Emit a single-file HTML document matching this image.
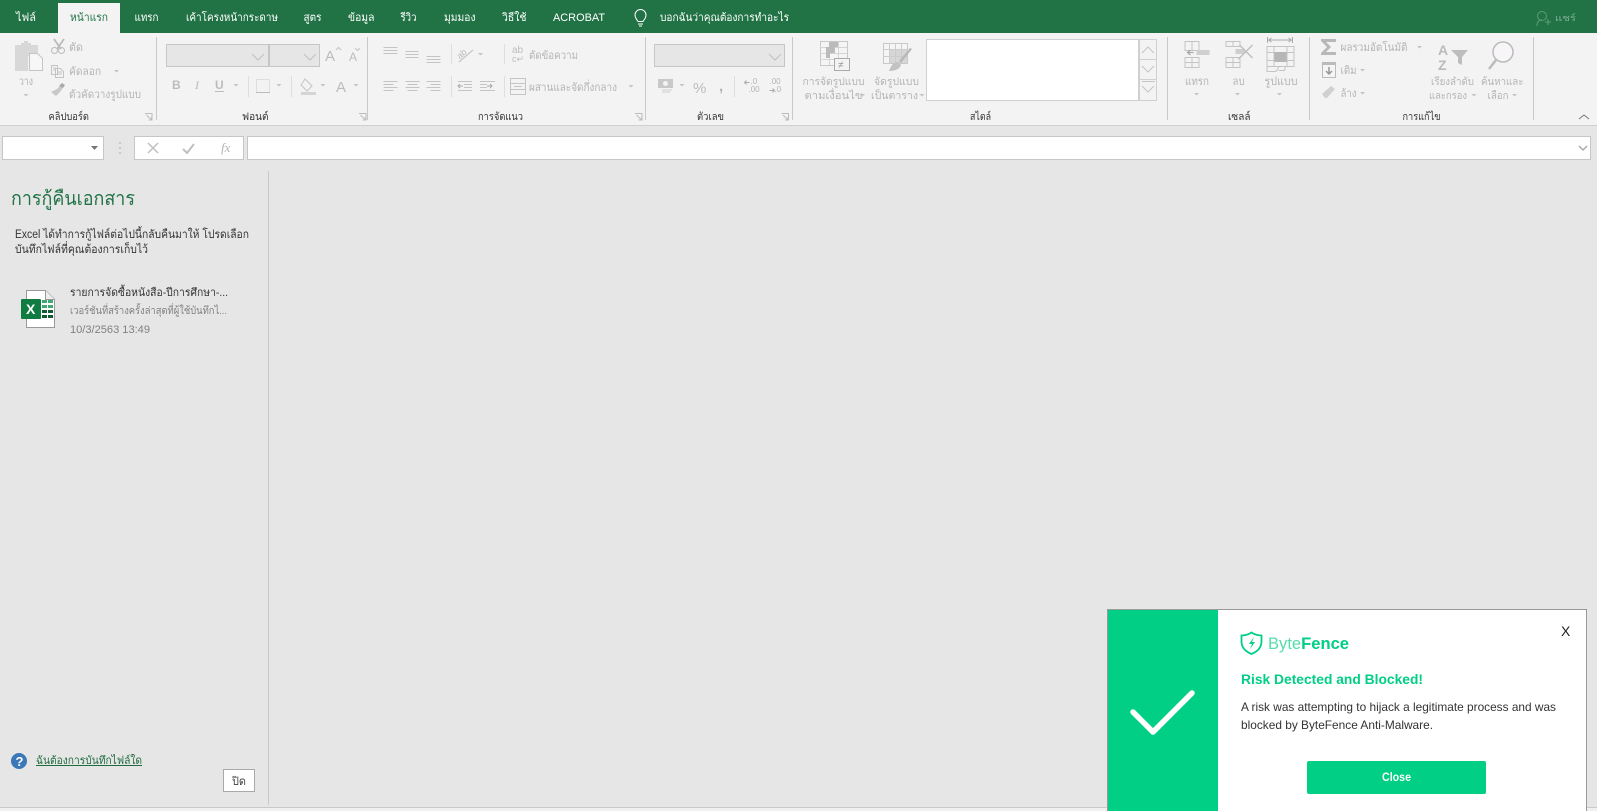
<!DOCTYPE html>
<html lang="th"><head><meta charset="utf-8"><title>Excel</title>
<style>
html,body{margin:0;padding:0;background:#e6e6e6;overflow:hidden}
svg{display:block;font-family:"Liberation Sans","DejaVu Sans","Noto Sans CJK SC",sans-serif}
.tab{fill:#fff;font-size:11px}
.d{fill:#b4b4b4;font-size:11px}
.g{fill:#333;font-size:10.5px}
.ic{fill:none;stroke:#c4c4c4;stroke-width:1}
.f{fill:#c8c8c8}
.sep{stroke:#c9c9c9;stroke-width:1}
.sep2{stroke:#dedede;stroke-width:1}
</style></head><body>
<svg width="1597" height="811" viewBox="0 0 1597 811" xmlns="http://www.w3.org/2000/svg">
<defs>
<path id="ar" d="M0 0h5l-2.500 2.500z" fill="#c4c4c4"/>
<path id="la" d="M.5.5h7v7M2 2l5 5M7 4v3H4" fill="none" stroke="#bdbdbd"/>
</defs>
<rect width="1597" height="811" fill="#e6e6e6"/>
<!-- title tabs -->
<rect width="1597" height="33" fill="#217346"/>
<rect x="58" y="3" width="62" height="30" fill="#f3f3f3"/>
<g class="tab">
<text x="16" y="21" textLength="20" lengthAdjust="spacingAndGlyphs">ไฟล์</text>
<text x="70" y="21" textLength="38" lengthAdjust="spacingAndGlyphs" style="fill:#217346">หน้าแรก</text>
<text x="134.500" y="21" textLength="24" lengthAdjust="spacingAndGlyphs">แทรก</text>
<text x="186" y="21" textLength="92" lengthAdjust="spacingAndGlyphs">เค้าโครงหน้ากระดาษ</text>
<text x="303.500" y="21" textLength="18" lengthAdjust="spacingAndGlyphs">สูตร</text>
<text x="348" y="21" textLength="26.500" lengthAdjust="spacingAndGlyphs">ข้อมูล</text>
<text x="400.500" y="21" textLength="16" lengthAdjust="spacingAndGlyphs">รีวิว</text>
<text x="444" y="21" textLength="31.500" lengthAdjust="spacingAndGlyphs">มุมมอง</text>
<text x="502" y="21" textLength="24.500" lengthAdjust="spacingAndGlyphs">วิธีใช้</text>
<text x="553" y="21" textLength="52" lengthAdjust="spacingAndGlyphs">ACROBAT</text>
<text x="660" y="21" textLength="129" lengthAdjust="spacingAndGlyphs">บอกฉันว่าคุณต้องการทำอะไร</text>
</g>
<path d="M638 21.500c-1-2-3-3-3-6.500a5.500 5.500 0 0 1 11 0c0 3.500-2 4.500-3 6.500zM638 24h5M639 26h3" fill="none" stroke="#fff"/>
<g transform="translate(13 0)">
<circle cx="1529" cy="16" r="4.500" fill="none" stroke="#5f9c7b"/>
<path d="M1524 26c0-4 2-6 5-6M1532 22h6M1535 19v6" fill="none" stroke="#5f9c7b"/>
<text x="1542" y="21" class="tab" style="font-size:9px;fill:#7fae95" textLength="21" lengthAdjust="spacingAndGlyphs">แชร์</text>
</g>
<!-- ribbon -->
<rect y="33" width="1597" height="92" fill="#f3f3f3"/>
<path d="M0 125.500h1597" stroke="#cfcfcf"/>
<g class="sep">
<path d="M156.500 37v83M367.500 37v83M645.500 37v83M792.500 37v83M1167.500 37v83M1309.500 37v83M1533.500 37v83"/>
</g>
<g class="sep2">
<path d="M248.500 76v21M291.500 76v21M451.500 44v20M451.500 76v21M504.500 44v20M504.500 76v21M734.500 76v21"/>
</g>
<!-- group labels -->
<g class="g">
<text x="48.500" y="120" textLength="40.500" lengthAdjust="spacingAndGlyphs">คลิปบอร์ด</text>
<text x="242" y="120" textLength="26.500" lengthAdjust="spacingAndGlyphs">ฟอนต์</text>
<text x="478" y="120" textLength="45" lengthAdjust="spacingAndGlyphs">การจัดแนว</text>
<text x="697" y="120" textLength="27" lengthAdjust="spacingAndGlyphs">ตัวเลข</text>
<text x="970" y="120" textLength="21" lengthAdjust="spacingAndGlyphs">สไตล์</text>
<text x="1228" y="120" textLength="22.500" lengthAdjust="spacingAndGlyphs">เซลล์</text>
<text x="1402.500" y="120" textLength="38" lengthAdjust="spacingAndGlyphs">การแก้ไข</text>
</g>
<use href="#la" x="144.500" y="113"/><use href="#la" x="358.500" y="113"/><use href="#la" x="634.500" y="113"/><use href="#la" x="781" y="113"/>
<path d="M1579 119l5-4 5 4" fill="none" stroke="#777"/>
<!-- clipboard -->
<g transform="translate(1 0)">
<path d="M14 45h6v-2h3v-2h4v2h3v2h7v11h-10v15h-13z" fill="#d8d8d8"/>
<path d="M28.500 53.500h8l5 5v12h-13z" fill="#f7f7f7" stroke="#c4c4c4"/>
<text x="18" y="85" class="d" textLength="14" lengthAdjust="spacingAndGlyphs">วาง</text>
<use href="#ar" x="22.500" y="94"/>
<path d="M53 39l7 10M63 39l-7 10" stroke="#bbb" stroke-width="1.800" fill="none"/>
<circle cx="53.500" cy="50.500" r="3" fill="none" stroke="#bbb"/><circle cx="60.500" cy="50.500" r="3" fill="none" stroke="#bbb"/>
<text x="68" y="51" class="d" textLength="14" lengthAdjust="spacingAndGlyphs">ตัด</text>
<path d="M50.500 65.500h6v9h-6zM54.500 68.500h5l3 3v6h-8zM52 68h3M52 70h2M56 72h5M56 74h5" class="ic"/>
<text x="68" y="75" class="d" textLength="32" lengthAdjust="spacingAndGlyphs">คัดลอก</text>
<use href="#ar" x="113" y="70"/>
<path d="M50 92l6-3 4-4 2 3-4 5-3 3z" class="f"/><path d="M58 86l3-3 3 2-2 3z" fill="#aaa"/>
<text x="68" y="98" class="d" textLength="72" lengthAdjust="spacingAndGlyphs">ตัวคัดวางรูปแบบ</text>
</g>
<!-- font -->
<rect x="166.500" y="44.500" width="102" height="22" fill="#e6e6e6" stroke="#c6c6c6"/>
<rect x="269.500" y="44.500" width="50" height="22" fill="#e6e6e6" stroke="#c6c6c6"/>
<path d="M252 54l6 6 6-6M304 54l6 6 6-6" fill="none" stroke="#c0c0c0"/>
<g transform="translate(5 0)">
<text x="320" y="61" style="font-size:15px;fill:#bcbcbc">A</text><path d="M331 50l2.500-2.500L336 50" class="ic"/>
<text x="344" y="61" style="font-size:12px;fill:#bcbcbc">A</text><path d="M350 48l2.500 2.500L355 48" class="ic"/>
</g>
<g transform="translate(3 0)">
<g style="fill:#bcbcbc;font-size:12px">
<text x="169" y="89" font-weight="700">B</text>
<text x="192" y="89" font-style="italic" font-family="Liberation Serif">I</text>
<text x="212" y="89" font-weight="700">U</text>
</g>
<path d="M212 91.500h9" stroke="#bcbcbc"/>
<use href="#ar" x="230.500" y="84"/>
</g>
<g transform="translate(4 0)">
<rect x="252.500" y="79.500" width="13" height="13" fill="none" stroke="#c8c8c8" stroke-dasharray="1 1"/>
<path d="M252 92.500h14" stroke="#bbb"/>
<use href="#ar" x="272.500" y="84"/>
</g>
<g transform="translate(5 0)">
<path d="M300 79l7 7-5 5-6-6z" class="ic"/><path d="M296 92h15v3h-15z" fill="#d4d4d4"/>
<use href="#ar" x="315.500" y="84"/>
<text x="331" y="92" style="font-size:15px;fill:#bcbcbc">A</text>
<use href="#ar" x="348.500" y="84"/>
</g>
<!-- alignment -->
<g transform="translate(5.500 0)">
<g class="ic">
<path d="M378 47.500h14M378 50.500h14M378 53.500h14M400 51.500h13M400 54.500h13M400 57.500h13M421 56.500h14M421 59.500h14M421 62.500h14"/>
<path d="M378 81.500h14M378 84.500h10M378 87.500h14M378 90.500h10M400 81.500h14M402 84.500h10M400 87.500h14M402 90.500h10M421 81.500h14M425 84.500h10M421 87.500h14M425 90.500h10"/>
</g>
</g>
<g transform="translate(7 0)">
<g class="ic">
<path d="M451 81.500h14M457 84.500h8M457 87.500h8M451 90.500h14M473 81.500h15M473 84.500h7M473 87.500h7M473 90.500h15"/>
<path d="M503.500 78.500h15v16h-15zM503.500 83.500h15M503.500 89.500h15M507 86.500h8"/>
</g>
<path d="M456 86l-4-0M453 84l-2 2 2 2M480 86h5M483 84l2 2-2 2" fill="none" stroke="#aaa"/>
<text x="450" y="56" style="font-size:9px;fill:#bcbcbc" transform="rotate(-40 456 54)">ab</text>
<path d="M452 62l14-12" stroke="#bbb"/>
<use href="#ar" x="471" y="53"/>
<text x="505" y="53" style="font-size:10px;fill:#bcbcbc">ab</text><text x="505" y="62" style="font-size:9px;fill:#bcbcbc">c↵</text>
</g>
<text x="529" y="59" class="d" textLength="49" lengthAdjust="spacingAndGlyphs">ตัดข้อความ</text>
<text x="529" y="91" class="d" textLength="88" lengthAdjust="spacingAndGlyphs">ผสานและจัดกึ่งกลาง</text>
<use href="#ar" x="628.500" y="85"/>
<!-- number -->
<rect x="654.500" y="44.500" width="130" height="22" fill="#e6e6e6" stroke="#c6c6c6"/>
<path d="M769 54l6 6 6-6" fill="none" stroke="#c0c0c0" stroke-width="1"/>
<g transform="translate(2 0)">
<rect x="656" y="79" width="15" height="9" fill="#c8c8c8"/><circle cx="663.500" cy="83.500" r="2.500" fill="#f3f3f3"/>
<path d="M660 90h10M660 92h8" stroke="#ccc"/>
<use href="#ar" x="677.500" y="84"/>
<text x="691" y="93" style="font-size:15px;fill:#bcbcbc">%</text>
</g>
<text x="719" y="91" style="font-size:15px;font-weight:700;fill:#b4b4b4">,</text>
<g transform="translate(3.500 0)">
<g style="font-size:8px;fill:#b4b4b4">
<text x="747" y="84">.0</text><text x="745" y="92">.00</text><text x="766" y="84">.00</text><text x="771" y="92">.0</text>
</g>
<path d="M741 82.500h5M743 80.500l-2 2 2 2M766 90.500h5M769 88.500l2 2-2 2" fill="none" stroke="#aaa"/>
</g>
<!-- styles -->
<g transform="translate(4 0)">
<rect x="816.500" y="41.500" width="27" height="24" fill="#f5f5f5" stroke="#c8c8c8"/>
<path d="M816 47.500h27M816 53.500h27M816 59.500h27M825.500 41v24M834.500 41v24" stroke="#d5d5d5" fill="none"/>
<path d="M825 42h9v5h-3v6h-5v5h-4v-11h3z" fill="#bbb"/>
<rect x="830.500" y="58.500" width="15" height="12" fill="#f3f3f3" stroke="#aaa"/>
<text x="834" y="68" style="font-size:10px;fill:#999">≠</text>
</g>
<g transform="translate(5 0)">
<rect x="878.500" y="43.500" width="24" height="20" fill="#f5f5f5" stroke="#c8c8c8"/>
<rect x="884" y="50" width="18" height="13" fill="#d6d6d6"/>
<path d="M878 49.500h24M878 56.500h24M884.500 43v20M890.500 43v20M896.500 43v20" stroke="#ccc" fill="none"/>
<path d="M907 49l-11 14-2-2 11-13z" fill="#b8b8b8"/>
<path d="M884 71c2-6 5-9 9-9l3 3c-1 4-6 6-12 6z" fill="#c2c2c2"/>
</g>
<g class="d" style="font-size:10.500px">
<text x="802.500" y="85" textLength="62" lengthAdjust="spacingAndGlyphs">การจัดรูปแบบ</text>
<text x="804.500" y="99" textLength="58" lengthAdjust="spacingAndGlyphs">ตามเงื่อนไข</text>
<text x="874" y="85" textLength="45" lengthAdjust="spacingAndGlyphs">จัดรูปแบบ</text>
<text x="871" y="99" textLength="47" lengthAdjust="spacingAndGlyphs">เป็นตาราง</text>
</g>
<use href="#ar" x="860" y="94"/><use href="#ar" x="919.500" y="94"/>
<rect x="926.500" y="39.500" width="212" height="61" fill="#fff" stroke="#d0d0d0"/>
<rect x="1139.500" y="39.500" width="17" height="61" fill="#f3f3f3" stroke="#d0d0d0"/>
<path d="M1139 59.500h18M1139 79.500h18" stroke="#d0d0d0"/>
<path d="M1142 53l6-6 6 6M1142 66l6 6 6-6M1142 86l6 6 6-6M1142 81.500h13" fill="none" stroke="#c4c4c4"/>
<!-- cells -->
<g transform="translate(3.500 0)">
<path class="ic" d="M1181.500 41.500h14v9h-14zM1188.500 41.500v9M1181.500 57.500h14v10h-14zM1181.500 62.500h14M1188.500 57.500v10"/>
<rect x="1193" y="50" width="13" height="5" fill="#cfcfcf"/><path d="M1184 52.500h6M1187 50l-3 2.500 3 2.500" fill="none" stroke="#aaa" stroke-width="1.300"/>
<use href="#ar" x="1190.500" y="93"/>
</g>
<g transform="translate(4.500 0)">
<path class="ic" d="M1221.500 41.500h14v5h-14zM1228.500 41.500v5M1221.500 57.500h14v10h-14zM1221.500 62.500h14M1228.500 57.500v10"/>
<rect x="1231" y="49" width="9" height="5" fill="#cfcfcf"/>
<path d="M1235 45l13 13M1248 45l-14 14" stroke="#bfbfbf" stroke-width="1.500"/>
<use href="#ar" x="1230.500" y="93"/>
</g>
<g transform="translate(5.500 0)">
<path class="ic" d="M1261.500 46.500h27v20h-27zM1268.500 46.500v20M1281.500 46.500v20M1261.500 52.500h27M1261.500 60.500h27M1261.500 66.500v5h9l3-5M1280 66.500l-1 4h-6"/>
<rect x="1269" y="52" width="12" height="10" fill="#b6b6b6"/>
<path d="M1262 37v6M1287 37v6M1263 40h23M1266 38l-3 2 3 2M1283 38l3 2-3 2" fill="none" stroke="#aaa"/>
<use href="#ar" x="1271.500" y="93"/>
</g>
<g class="d">
<text x="1185" y="85" textLength="24" lengthAdjust="spacingAndGlyphs">แทรก</text>
<text x="1232.500" y="85" textLength="12" lengthAdjust="spacingAndGlyphs">ลบ</text>
<text x="1264.500" y="85" textLength="33" lengthAdjust="spacingAndGlyphs">รูปแบบ</text>
</g>
<!-- editing -->
<g transform="translate(7 0)">
<path d="M1314 39h15v3h-10l5 5-5 5h10v3h-15v-2l6-6-6-6z" fill="#b8b8b8"/>
<rect x="1315.500" y="62.500" width="13" height="15" fill="#f5f5f5" stroke="#bbb"/><rect x="1315" y="62" width="14" height="3" fill="#bbb"/>
<path d="M1322 67v7M1319 71l3 3 3-3" fill="none" stroke="#999" stroke-width="1.500"/>
<path d="M1315 94l9-8 4 3-8 9h-2z" fill="#d0d0d0"/>
</g>
<text x="1340.500" y="51" class="d" textLength="67" lengthAdjust="spacingAndGlyphs">ผลรวมอัตโนมัติ</text>
<use href="#ar" x="1417" y="46"/>
<text x="1340.500" y="74" class="d" textLength="16" lengthAdjust="spacingAndGlyphs">เติม</text>
<use href="#ar" x="1360" y="69"/>
<text x="1340.500" y="97" class="d" textLength="16" lengthAdjust="spacingAndGlyphs">ล้าง</text>
<use href="#ar" x="1360" y="92"/>
<g transform="translate(10 0)">
<text x="1428" y="55" style="font-size:14px;fill:#bbb;font-weight:700">A</text>
<text x="1428" y="70" style="font-size:14px;fill:#bbb;font-weight:700">Z</text>
<path d="M1441 50h17l-6 7v8l-4-2v-6z" fill="#bdbdbd"/>
</g>
<circle cx="1503" cy="52" r="10" fill="#f8f5f8" stroke="#bbb" stroke-width="1.500"/>
<path d="M1496 60l-7 9" stroke="#bbb" stroke-width="2.500"/>
<g class="d" style="font-size:10.500px">
<text x="1431" y="85" textLength="43" lengthAdjust="spacingAndGlyphs">เรียงลำดับ</text>
<text x="1429" y="99" textLength="38" lengthAdjust="spacingAndGlyphs">และกรอง</text>
<text x="1481" y="85" textLength="42.500" lengthAdjust="spacingAndGlyphs">ค้นหาและ</text>
<text x="1487.500" y="99" textLength="21" lengthAdjust="spacingAndGlyphs">เลือก</text>
</g>
<use href="#ar" x="1471.500" y="94"/><use href="#ar" x="1512" y="94"/>
<!-- formula bar -->
<rect x="2.500" y="136.500" width="101" height="23" fill="#fff" stroke="#c6c6c6"/>
<path d="M91 146h7l-3.500 4z" fill="#777"/>
<path d="M120 142v2M120 147v2M120 152v2" stroke="#aaa"/>
<rect x="134.500" y="136.500" width="109" height="23" fill="#fff" stroke="#c6c6c6"/>
<path d="M148 143l10 10M158 143l-10 10" stroke="#c0c0c0" stroke-width="1.500"/>
<path d="M183 149l4 4 7-9" fill="none" stroke="#c0c0c0" stroke-width="2"/>
<text x="221" y="152" style="font-family:'Liberation Serif';font-style:italic;font-size:13px;fill:#b5b5b5">fx</text>
<rect x="247.500" y="136.500" width="1343" height="23" fill="#fff" stroke="#c6c6c6"/>
<path d="M1579 146l4 4 4-4" fill="none" stroke="#aaa" stroke-width="1.500"/>
<!-- recovery panel -->
<path d="M268.500 171v634" stroke="#c8c8c8"/>
<path d="M0 807.500h1597" stroke="#c9c9c9"/><rect y="808" width="1597" height="3" fill="#f0f0f0"/>
<text x="11" y="205" style="font-size:19.500px;fill:#217346" textLength="124" lengthAdjust="spacingAndGlyphs">การกู้คืนเอกสาร</text>
<g style="font-size:11.500px;fill:#333">
<text x="15" y="238" textLength="234" lengthAdjust="spacingAndGlyphs">Excel ได้ทำการกู้ไฟล์ต่อไปนี้กลับคืนมาให้ โปรดเลือก</text>
<text x="15" y="253" textLength="133" lengthAdjust="spacingAndGlyphs">บันทึกไฟล์ที่คุณต้องการเก็บไว้</text>
</g>
<path d="M26.500 290.500h19l9 9v28h-28z" fill="#fff" stroke="#9a9a9a"/>
<path d="M45.500 290.500v9h9" fill="#eee" stroke="#9a9a9a"/>
<rect x="21" y="299" width="20" height="20" rx="1" fill="#107c41"/>
<text x="26" y="314" style="font-size:14px;font-weight:700;fill:#fff">X</text>
<path d="M42 300h5v3h-5zM48 300h5v3h-5zM42 305h5v3h-5zM48 305h5v3h-5z" fill="#3fa873"/>
<path d="M42 310h5v3h-5zM48 310h5v3h-5zM42 315h5v3h-5zM48 315h5v3h-5z" fill="#0f5c33"/>
<text x="70" y="296" style="font-size:11px;fill:#333" textLength="158" lengthAdjust="spacingAndGlyphs">รายการจัดซื้อหนังสือ-ปีการศึกษา-...</text>
<text x="70" y="314" style="font-size:10.500px;fill:#808080" textLength="157" lengthAdjust="spacingAndGlyphs">เวอร์ชันที่สร้างครั้งล่าสุดที่ผู้ใช้บันทึกไ...</text>
<text x="70" y="333" style="font-size:11px;fill:#808080" textLength="80" lengthAdjust="spacingAndGlyphs">10/3/2563 13:49</text>
<circle cx="19" cy="761" r="8" fill="#3a78b8"/>
<text x="15.500" y="766" style="font-size:13px;font-weight:700;fill:#fff">?</text>
<text x="36" y="764" style="font-size:11px;fill:#1e6b3d" textLength="106" lengthAdjust="spacingAndGlyphs">ฉันต้องการบันทึกไฟล์ใด</text>
<path d="M36 765.500h106" stroke="#1e6b3d"/>
<rect x="223.500" y="769.500" width="31" height="22" fill="#fff" stroke="#aaa"/>
<text x="232" y="785" style="font-size:11.500px;fill:#444" textLength="14" lengthAdjust="spacingAndGlyphs">ปิด</text>
<!-- ByteFence popup -->
<rect x="1107.500" y="609.500" width="479" height="210" fill="#fff" stroke="#999"/>
<rect x="1108" y="610" width="110" height="201" fill="#00cf85"/>
<path d="M1133 712l20 20 39-39" fill="none" stroke="#fff" stroke-width="5.500" stroke-linecap="round" stroke-linejoin="round"/>
<path d="M1251.500 632.500c3 2 6 3 10 3v6c0 6-4 10-10 12.500c-6-2.500-10-6.500-10-12.500v-6c4 0 7-1 10-3z" fill="none" stroke="#00cf85" stroke-width="1.800"/>
<path d="M1254 637l-5 7h3l-2 5 5-7h-3z" fill="#00cf85"/>
<text x="1268" y="649" style="font-size:17px" textLength="81" lengthAdjust="spacingAndGlyphs"><tspan fill="#55dca9">Byte</tspan><tspan fill="#00cf85" font-weight="700">Fence</tspan></text>
<text x="1241" y="684" style="font-size:13.500px;font-weight:700;fill:#00cf85" textLength="182" lengthAdjust="spacingAndGlyphs">Risk Detected and Blocked!</text>
<g style="font-size:12px;fill:#333">
<text x="1241" y="711" textLength="315" lengthAdjust="spacingAndGlyphs">A risk was attempting to hijack a legitimate process and was</text>
<text x="1241" y="729" textLength="192" lengthAdjust="spacingAndGlyphs">blocked by ByteFence Anti-Malware.</text>
</g>
<text x="1561" y="636" style="font-size:14px;fill:#222">X</text>
<rect x="1307" y="761" width="179" height="33" rx="2" fill="#00cf85"/>
<text x="1382" y="781" style="font-size:12px;font-weight:700;fill:#fff" textLength="29" lengthAdjust="spacingAndGlyphs">Close</text>
</svg>
</body></html>
